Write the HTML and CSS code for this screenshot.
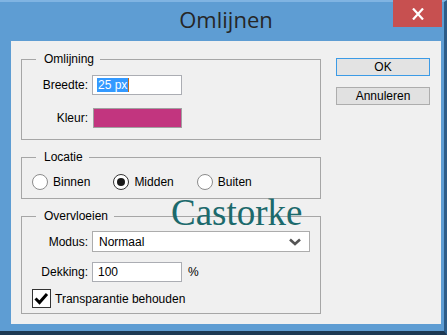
FILE: index.html
```html
<!DOCTYPE html>
<html lang="nl">

<head>
    <meta charset="UTF-8">
    <meta name="viewport" content="width=device-width, initial-scale=1.0">
    <link rel="stylesheet" href="styles.css">
    <title>Omlijnen</title>
</head>

<body>

    <div class="venster">

        <div class="titelbalk">
            <span></span>
            <h1 class="titel">Omlijnen</h1>
            <button class="sluiten" aria-label="Sluiten">
                <svg width="14" height="12" viewBox="0 0 14 12">
                    <path d="M2 0.5 L12 11.5 M12 0.5 L2 11.5" stroke="#fff" stroke-width="2.2" fill="none"/>
                </svg>
            </button>
        </div>

        <div class="inhoud">

            <div class="groepen">

                <fieldset class="groep">
                    <legend>Omlijning</legend>
                    <div class="rooster omlijning">
                        <label class="label">Breedte:</label>
                        <div class="veld breed"><span class="selectie">25 px</span><span class="cursor"></span></div>
                        <label class="label">Kleur:</label>
                        <div class="kleur"></div>
                    </div>
                </fieldset>

                <fieldset class="groep">
                    <legend>Locatie</legend>
                    <div class="opties">
                        <label class="optie"><span class="rondje"></span>Binnen</label>
                        <label class="optie"><span class="rondje aan"></span>Midden</label>
                        <label class="optie"><span class="rondje"></span>Buiten</label>
                    </div>
                </fieldset>

                <fieldset class="groep">
                    <legend>Overvloeien</legend>
                    <div class="rooster overvloeien">
                        <label class="label">Modus:</label>
                        <div class="keuze">
                            <span>Normaal</span>
                            <svg width="12" height="8" viewBox="0 0 12 8">
                                <path d="M1 1.5 L6 6 L11 1.5" stroke="#555" stroke-width="2.6" fill="none"/>
                            </svg>
                        </div>
                        <label class="label">Dekking:</label>
                        <div class="dekking">
                            <div class="veld breed">100</div>
                            <span class="procent">%</span>
                        </div>
                        <label class="vinkje">
                            <span class="vakje">
                                <svg width="17" height="17" viewBox="0 0 17 17">
                                    <path d="M2.5 8.5 L6.5 12.5 L14 4" stroke="#000" stroke-width="3" fill="none"/>
                                </svg>
                            </span>
                            Transparantie behouden
                        </label>
                    </div>
                </fieldset>

            </div>

            <div class="knoppen">
                <button class="knop standaard">OK</button>
                <button class="knop">Annuleren</button>
            </div>

        </div>

        <div class="watermerk">Castorke</div>

    </div>

</body>
</html>
```

FILE: styles.css
```css
body {
    margin: 0;
    font-family: "Liberation Sans", Arial, sans-serif;
    font-size: 12px;
    color: #000;
}

.venster {
    position: relative;
    width: 447px;
    height: 335px;
    box-sizing: border-box;
    background: #5e9dd3;
    border-top: 2px solid #80b4e2;
    border-right: 3px solid #2d5c88;
    border-bottom: 4px solid #1d3953;
    padding: 0 3px 7px 11px;
}

.titelbalk {
    height: 39px;
    display: grid;
    grid-template-columns: 1fr auto 1fr;
    align-items: start;
}

.titel {
    margin: 0;
    padding-top: 2px;
    font-family: "Open Sans", sans-serif;
    font-weight: normal;
    font-size: 22px;
    line-height: 30px;
    color: #262626;
}

.sluiten {
    justify-self: end;
    width: 49px;
    height: 27px;
    margin: -2px -1px 0 0;
    padding: 0;
    border: none;
    background: #c75050;
    display: flex;
    align-items: center;
    justify-content: center;
}

.inhoud {
    height: 283px;
    background: #f0f0f0;
    display: flex;
    align-items: flex-start;
}

.groepen {
    margin: 11px 0 0 10px;
    width: 300px;
    display: flex;
    flex-direction: column;
    gap: 10px;
}

.groep {
    margin: 0;
    padding: 0;
    border: 1px solid #a6a6a6;
    min-width: 0;
}

.groep legend {
    margin-left: 14px;
    padding: 0 6px 0 8px;
    line-height: 14px;
}

.rooster {
    display: grid;
    grid-template-columns: 66px auto;
    column-gap: 4px;
    align-items: center;
}

.label {
    text-align: right;
}

.omlijning {
    padding: 9px 0 11px 0;
    row-gap: 13px;
}

.veld {
    height: 20px;
    box-sizing: border-box;
    border: 1px solid #abadb3;
    background: #fff;
    padding-left: 4px;
    display: flex;
    align-items: center;
}

.breed {
    width: 90px;
}

.selectie {
    background: #3399ff;
    color: #fff;
    line-height: 14px;
    padding: 0 1px;
}

.cursor {
    width: 1px;
    height: 14px;
    background: #c06a1a;
}

.kleur {
    width: 89px;
    height: 20px;
    margin-left: 1px;
    box-sizing: border-box;
    border: 1px solid #a0a0a0;
    background: #c2357f;
}

.opties {
    display: flex;
    gap: 23px;
    padding: 10px 0 8px 10px;
}

.optie {
    display: flex;
    align-items: center;
    gap: 5px;
    height: 16px;
}

.rondje {
    width: 16px;
    height: 16px;
    box-sizing: border-box;
    border: 1px solid #8c8c8c;
    border-radius: 50%;
    background: #fff;
    display: flex;
    align-items: center;
    justify-content: center;
}

.rondje.aan {
    border-color: #333;
}

.rondje.aan::after {
    content: "";
    width: 8px;
    height: 8px;
    border-radius: 50%;
    background: #1a1a1a;
}

.overvloeien {
    padding: 8px 0 5px 0;
    row-gap: 10px;
}

.keuze {
    width: 218px;
    height: 21px;
    box-sizing: border-box;
    border: 1px solid #acacac;
    background: #fff;
    display: flex;
    align-items: center;
    justify-content: space-between;
    padding: 0 8px 0 6px;
}

.dekking {
    display: flex;
    align-items: center;
}

.dekking .veld {
    padding-left: 5px;
}

.procent {
    margin-left: 6px;
}

.vinkje {
    grid-column: 1 / 3;
    margin: -3px 0 0 10px;
    display: flex;
    align-items: center;
    gap: 4px;
}

.vakje {
    width: 19px;
    height: 19px;
    box-sizing: border-box;
    border: 1px solid #333;
    background: #fff;
    display: flex;
    align-items: center;
    justify-content: center;
}

.knoppen {
    margin: 17px 0 0 15px;
    display: flex;
    flex-direction: column;
    gap: 11px;
}

.knop {
    width: 94px;
    height: 18px;
    padding: 0;
    border: 1px solid #adadad;
    background: #e1e1e1;
    font-family: "Liberation Sans", Arial, sans-serif;
    font-size: 12px;
    color: #000;
}

.knop.standaard {
    border-color: #3c9be6;
    background: #e3e3e3;
}

.watermerk {
    position: absolute;
    left: 171px;
    top: 193px;
    font-family: "Liberation Serif", "Times New Roman", serif;
    font-size: 37px;
    line-height: 36px;
    color: #1c6a6c;
}
```
